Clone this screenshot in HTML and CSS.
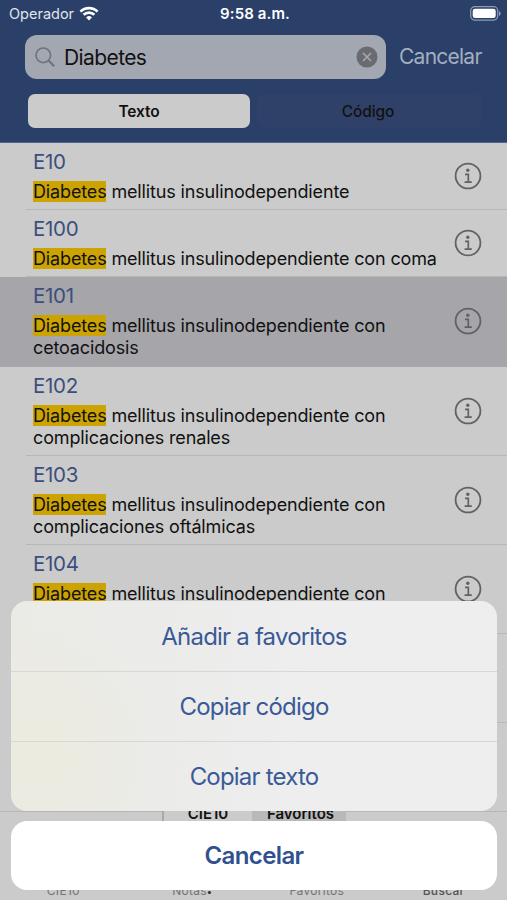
FILE: index.html
```html
<!DOCTYPE html>
<html lang="es">
    <head>
        <meta charset="UTF-8">
        <title>CIE10</title>
        <link rel="stylesheet" href="styles.css">
    </head>
    <body>
        <svg class="defs" width="0" height="0">
            <symbol id="info" viewBox="0 0 28 28">
                <circle cx="14" cy="14" r="12.4" fill="none" stroke="#626264" stroke-width="1.8"/>
                <circle cx="13.8" cy="8.2" r="1.7" fill="#626264"/>
                <path d="M11 12.3h3.3v7.8M10.6 20.2h7.2" fill="none" stroke="#626264" stroke-width="1.7"/>
            </symbol>
        </svg>
        <div id="screen">
            <div class="header">
                <div class="status">
                    <div class="carrier">
                        <span>Operador</span>
                        <svg width="20" height="15" viewBox="0 0 20 15" fill="none" stroke="#fff" stroke-width="2.6">
                            <path d="M1.4 5.6a12.3 12.3 0 0 1 17.2 0"/>
                            <path d="M4.6 8.8a7.7 7.7 0 0 1 10.8 0"/>
                            <path d="M10 14.4l-2.9-3a4.2 4.2 0 0 1 5.8 0z" fill="#fff" stroke="none"/>
                        </svg>
                    </div>
                    <div class="time">9:58 a.m.</div>
                    <svg class="battery" width="31" height="15" viewBox="0 0 31 15">
                        <rect x=".7" y=".7" width="27" height="13.4" rx="4" fill="none" stroke="#8e9bb5" stroke-width="1.2"/>
                        <rect x="2.7" y="2.7" width="23" height="9.4" rx="2.4" fill="#fff"/>
                        <path d="M29 5v5q1.7-.8 1.7-2.5T29 5z" fill="#8e9bb5"/>
                    </svg>
                </div>
                <div class="search">
                    <div class="field">
                        <svg width="20" height="20" viewBox="0 0 20 20" fill="none" stroke="#6f737c" stroke-width="1.7">
                            <circle cx="8.3" cy="8.3" r="7.3"/>
                            <path d="M13.6 13.6l5.6 5.6" stroke-width="2.1"/>
                        </svg>
                        <span class="query">Diabetes</span>
                        <svg width="22" height="22" viewBox="0 0 22 22">
                            <circle cx="11" cy="11" r="10.5" fill="#6a6b70"/>
                            <path d="M7 7l8 8M15 7l-8 8" stroke="#a5a8b0" stroke-width="1.6"/>
                        </svg>
                    </div>
                    <span class="cancel">Cancelar</span>
                </div>
                <div class="scope">
                    <div class="on">Texto</div>
                    <div>Código</div>
                </div>
            </div>
            <ul class="list">
                <li>
                    <div class="cell">
                        <h3>E10</h3>
                        <p><mark>Diabetes</mark> mellitus insulinodependiente</p>
                    </div>
                    <svg class="info"><use href="#info"/></svg>
                </li>
                <li>
                    <div class="cell">
                        <h3>E100</h3>
                        <p><mark>Diabetes</mark> mellitus insulinodependiente con coma</p>
                    </div>
                    <svg class="info"><use href="#info"/></svg>
                </li>
                <li class="two selected">
                    <div class="cell">
                        <h3>E101</h3>
                        <p><mark>Diabetes</mark> mellitus insulinodependiente con<br>cetoacidosis</p>
                    </div>
                    <svg class="info"><use href="#info"/></svg>
                </li>
                <li class="two">
                    <div class="cell">
                        <h3>E102</h3>
                        <p><mark>Diabetes</mark> mellitus insulinodependiente con<br>complicaciones renales</p>
                    </div>
                    <svg class="info"><use href="#info"/></svg>
                </li>
                <li class="two">
                    <div class="cell">
                        <h3>E103</h3>
                        <p><mark>Diabetes</mark> mellitus insulinodependiente con<br>complicaciones oftálmicas</p>
                    </div>
                    <svg class="info"><use href="#info"/></svg>
                </li>
                <li class="two">
                    <div class="cell">
                        <h3>E104</h3>
                        <p><mark>Diabetes</mark> mellitus insulinodependiente con</p>
                    </div>
                    <svg class="info"><use href="#info"/></svg>
                </li>
                <li class="two"></li>
                <li class="two last"></li>
            </ul>
            <div class="filter">
                <div class="on">CIE10</div>
                <div>Favoritos</div>
            </div>
            <div class="tabs">
                <span>CIE10</span>
                <span>Notas<b>•</b></span>
                <span>Favoritos</span>
                <span class="on">Buscar</span>
            </div>
            <div class="sheet">
                <div class="actions">
                    <div>Añadir a favoritos</div>
                    <div>Copiar código</div>
                    <div>Copiar texto</div>
                </div>
                <div class="close">Cancelar</div>
            </div>
        </div>
    </body>
</html>
```
FILE: styles.css
```css
*{
    box-sizing: border-box;
}
body{
    margin: 0;
    font-family: Inter, "Liberation Sans", sans-serif;
    color: #111;
}
h3, p, ul{
    margin: 0;
    padding: 0;
    font-weight: 400;
}
.defs{
    position: absolute;
}
#screen{
    position: relative;
    width: 507px;
    height: 900px;
    overflow: hidden;
    background: #cbcbcb;
}
.header{
    height: 143px;
    background: #2a4069;
    border-bottom: 1px solid #53648a;
}
.status{
    display: grid;
    grid-template-columns: 1fr auto 1fr;
    align-items: center;
    height: 27px;
    padding: 0 6px 0 9px;
    color: #fff;
}
.carrier{
    display: flex;
    align-items: center;
    gap: 5px;
    font-size: 14.5px;
    color: #e0e4ec;
}
.time{
    font-size: 15px;
    font-weight: 600;
    letter-spacing: .1px;
}
.battery{
    justify-self: end;
}
.search{
    display: flex;
    align-items: center;
    height: 44px;
    margin: 8px 25px 0;
}
.field{
    display: flex;
    flex: none;
    align-items: center;
    width: 361px;
    height: 44px;
    padding: 0 8px 0 10px;
    border-radius: 12px;
    background: #a3a7b1;
}
.query{
    flex: 1;
    margin-left: 9px;
    font-size: 21px;
    letter-spacing: -.6px;
}
.cancel{
    margin: -1px 0 0 13px;
    font-size: 21px;
    letter-spacing: -.75px;
    color: #a5aec0;
}
.scope{
    display: flex;
    height: 34px;
    margin: 15px 25px 0 28px;
    font-size: 15.5px;
    font-weight: 500;
    line-height: 35px;
    text-align: center;
}
.scope div{
    flex: 1;
    height: 34px;
    border-radius: 7px;
    background: #304169;
    letter-spacing: -.1px;
}
.scope div + div{
    margin-left: 7px;
    padding-right: 3px;
}
.scope .on{
    flex: 0 0 222px;
    background: #cbcbcb;
    font-weight: 600;
}
.list{
    list-style: none;
}
.list li{
    display: flex;
    align-items: center;
    height: 67.2px;
    padding: 0 25px 0 33px;
    background: linear-gradient(#b7b7b9, #b7b7b9) 26px 100% / 100% 1px no-repeat;
}
.list .two{
    height: 89.2px;
}
.list .selected{
    background: #a5a5aa;
}
.list .last{
    height: 88.4px;
    background-position: 0 100%;
}
.cell{
    flex: 1;
    height: 100%;
    padding-top: 6px;
}
.cell h3{
    font-size: 20.5px;
    line-height: 26px;
    letter-spacing: -.3px;
    color: #3b4f7c;
}
.cell p{
    margin-top: 6px;
    font-size: 18px;
    line-height: 22px;
    letter-spacing: -.15px;
    white-space: nowrap;
}
mark{
    background: #cca300;
    color: #111;
}
.info{
    width: 28px;
    height: 28px;
    margin-bottom: 1px;
}
.filter{
    display: flex;
    width: 184px;
    height: 34px;
    margin: -15px 0 0 162px;
    border-left: 2px solid #a9a9ab;
    font-size: 15px;
    font-weight: 600;
    line-height: 34px;
    text-align: center;
}
.filter div{
    flex: 1;
    background: #b9b9b9;
}
.filter div + div{
    padding-left: 3px;
}
.filter .on{
    flex: 0 0 88px;
    background: #cbcbcb;
}
.tabs{
    position: absolute;
    left: 0;
    right: 0;
    bottom: 1px;
    display: flex;
    font-size: 12px;
    line-height: 16px;
    letter-spacing: .3px;
    text-align: center;
    color: #737375;
}
.tabs span{
    flex: 1 0 0;
}
.tabs span:nth-child(2){
    text-indent: 4px;
}
.tabs b{
    font-size: 10px;
    color: #333;
}
.tabs .on{
    font-weight: 500;
    color: #555;
}
/* action sheet */
.sheet{
    position: absolute;
    left: 11px;
    right: 10px;
    top: 601px;
    font-size: 24px;
    text-align: center;
    color: #3a5a97;
}
.actions{
    overflow: hidden;
    border-radius: 16px;
    background:
        radial-gradient(130px 130px at 30px 150px, #ecebdf, transparent),
        linear-gradient(90deg, #ebebe6, #ebebea 30%, #eee 60%);
}
.actions div{
    height: 70px;
    line-height: 71px;
    letter-spacing: -.8px;
}
.actions div + div{
    border-top: 1px solid #d7d7d7;
    line-height: 70px;
}
.close{
    height: 69px;
    margin-top: 10px;
    border-radius: 16px;
    background: #fff;
    font-weight: 600;
    line-height: 70px;
    letter-spacing: -.6px;
    color: #2f5190;
}
```
